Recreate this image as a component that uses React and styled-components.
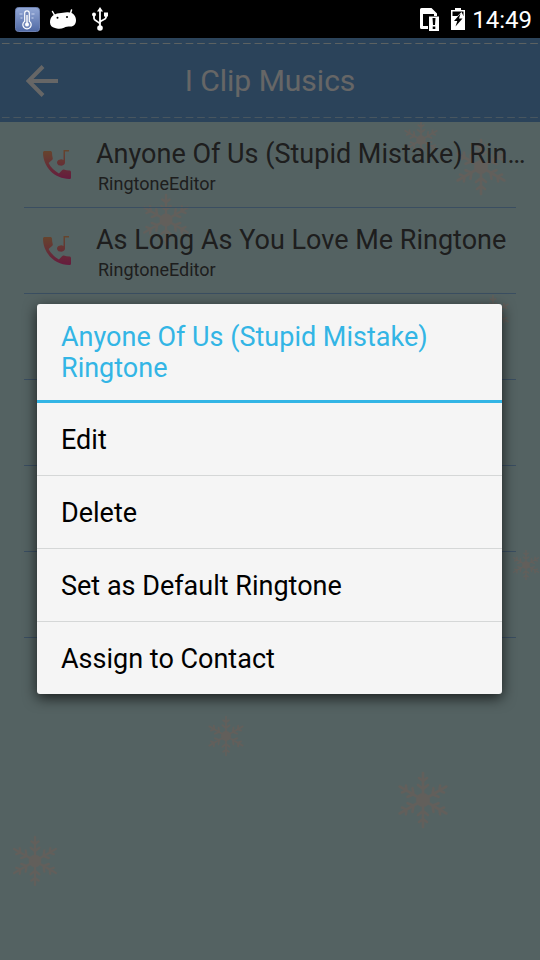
import styled, { createGlobalStyle } from 'styled-components';

const GlobalStyle = createGlobalStyle`
  * {
    box-sizing: border-box;
  }

  body {
    margin: 0;
    background-color: #d2f5f5;
    font-family: Roboto, 'Noto Sans', sans-serif;
  }
`;

const Page = styled.div`
  position: relative;
  min-height: 100vh;
  display: flex;
  flex-direction: column;
  overflow: hidden;
  background-color: #d2f5f5;
`;

const StatusBar = styled.div`
  display: flex;
  align-items: center;
  justify-content: space-between;
  height: 38px;
  padding: 0 8px 0 15px;
  background-color: #000;
  color: #fff;
`;

const StatusGroup = styled.div`
  display: flex;
  align-items: center;
  gap: ${props => props.$gap};

  svg {
    display: block;
  }
`;

const Clock = styled.time`
  padding-top: 2px;
  font-size: 24px;
  line-height: 36px;
`;

const Content = styled.div`
  position: relative;
  flex: 1;
`;

const Snow = styled.svg`
  position: absolute;
  top: 0;
  left: 0;
  width: 100%;
  color: #faece2;
`;

const Header = styled.header`
  position: relative;
  display: grid;
  grid-template-columns: 84px 1fr 84px;
  align-items: center;
  height: 84px;
  background-color: #6ba8e1;
`;

const Stitch = styled.span`
  position: absolute;
  left: 0;
  right: 0;
  ${props => (props.$bottom ? 'bottom: 4px;' : 'top: 5px;')}
  height: 1px;
  opacity: ${props => (props.$bottom ? 0.6 : 1)};
  background-image: linear-gradient(
    to right,
    transparent 16%,
    #e6f5f5 16%,
    #e6f5f5 84%,
    transparent 84%
  );
  background-size: calc(100% / 47) 100%;
`;

const BackButton = styled.button`
  display: flex;
  align-items: center;
  justify-content: center;
  height: 84px;
  padding: 2px 0 0;
  border: none;
  background: none;
  color: #fff;
  cursor: pointer;
`;

const HeaderTitle = styled.h1`
  margin: 0;
  padding-top: 2px;
  color: #fff;
  font-size: 30px;
  font-weight: 400;
  line-height: 36px;
  text-align: center;
`;

const List = styled.ul`
  position: relative;
  margin: 0;
  padding: 0;
  list-style: none;
`;

const Row = styled.li`
  height: 86px;
  padding-left: 24px;
`;

const RowBody = styled.div`
  display: flex;
  align-items: center;
  gap: 25px;
  height: 85px;
  padding-left: 19px;
  color: #4b4b4b;

  svg {
    flex: none;
  }
`;

const RowText = styled.div`
  flex: 1;
  min-width: 0;
  padding: 4px 6px 0 0;
`;

const RowTitle = styled.div`
  font-size: 27px;
  line-height: 34px;
  white-space: nowrap;
  overflow: hidden;
  text-overflow: ellipsis;
`;

const RowArtist = styled.div`
  padding-left: 2px;
  font-size: 18px;
  line-height: 26px;
`;

const Divider = styled.div`
  height: 1px;
  margin-right: 24px;
  background-color: #91c2f2;
`;

const Scrim = styled.div`
  position: absolute;
  inset: 0;
  display: flex;
  align-items: center;
  padding: 0 38px 0 37px;
  background-color: rgba(0, 0, 0, 0.6);
`;

const Dialog = styled.section`
  flex: 1;
  overflow: hidden;
  border-radius: 3px;
  background-color: #f5f5f5;
  box-shadow: 0 4px 14px rgba(0, 0, 0, 0.7);
`;

const DialogTitle = styled.h2`
  margin: 0;
  padding: 18px 24px 16px;
  border-bottom: 3px solid #33b5e5;
  color: #33b5e5;
  font-size: 27px;
  font-weight: 400;
  line-height: 31px;
`;

const Option = styled.button`
  display: block;
  width: 100%;
  height: ${props => (props.$last ? '72px' : '73px')};
  padding: 2px 24px 0;
  border: none;
  border-bottom: ${props => (props.$last ? 'none' : '1px solid #d5d7d7')};
  background: none;
  color: #000;
  font-family: inherit;
  font-size: 27px;
  line-height: 32px;
  text-align: left;
  cursor: pointer;
`;

const songs = [
  { title: 'Anyone Of Us (Stupid Mistake) Ringtone', artist: 'RingtoneEditor' },
  { title: 'As Long As You Love Me Ringtone', artist: 'RingtoneEditor' },
  null,
  null,
  null,
  null,
];

const options = ['Edit', 'Delete', 'Set as Default Ringtone', 'Assign to Contact'];

const flakes = [
  { x: 421, y: 102, r: 19 },
  { x: 481, y: 129, r: 28 },
  { x: 166, y: 182, r: 26 },
  { x: 493, y: 275, r: 18 },
  { x: 526, y: 527, r: 15 },
  { x: 226, y: 698, r: 20 },
  { x: 423, y: 762, r: 28 },
  { x: 35, y: 823, r: 25 },
];

const angles = [0, 60, 120, 180, 240, 300];

const Snowflakes = () => (
  <Snow viewBox="0 0 540 922" aria-hidden="true">
    {flakes.map(({ x, y, r }) => (
      <g
        key={`${x}-${y}`}
        transform={`translate(${x} ${y}) scale(${r / 28})`}
        fill="none"
        stroke="currentColor"
        strokeWidth="2.6"
        strokeLinecap="round"
        opacity="0.85"
      >
        <circle r="7" fill="currentColor" stroke="none" />
        {angles.map(angle => (
          <path
            key={angle}
            transform={`rotate(${angle})`}
            d="M0 -5V-27M-5 -15L0 -11L5 -15M-4 -22L0 -19L4 -22"
          />
        ))}
      </g>
    ))}
  </Snow>
);

const ThermometerIcon = () => (
  <svg width="25" height="25" viewBox="0 0 25 25">
    <defs>
      <linearGradient id="thermo" x1="0" y1="0" x2="0" y2="1">
        <stop offset="0" stopColor="#93a8d6" />
        <stop offset="1" stopColor="#5069a4" />
      </linearGradient>
    </defs>
    <rect x="0.5" y="0.5" width="24" height="24" rx="3" fill="url(#thermo)" stroke="#6d80b0" />
    <path
      d="M9.7 6.2a2.3 2.3 0 0 1 4.6 0v8a4.2 4.2 0 1 1-4.6 0z"
      fill="#7388bb"
      stroke="#fff"
      strokeWidth="1.2"
    />
    <path d="M12 8v9" stroke="#fff" strokeWidth="1.4" />
    <circle cx="12" cy="17.6" r="2" fill="#fff" />
    <path d="M4.5 7h3M5.500 11h2M16.500 7h3M16.500 11h2" stroke="#c9d4ee" />
  </svg>
);

const AndroidIcon = () => (
  <svg width="26" height="20" viewBox="0 0 26 20">
    <path d="M2.500 2.500L5 7M21.500 1L20 6" stroke="#fff" strokeWidth="1.5" strokeLinecap="round" />
    <path
      d="M0 13.500C0 8 3.500 4.800 9 4.200C12 4 14 3.600 17 3.200C22.500 2.800 26 6.500 26 11C26 15 24 17.500 20.500 17.500C17.500 17.500 16 17.500 14 18.800C11 20.200 7 19.800 5 19C2 18.500 0 16.500 0 13.500Z"
      fill="#fff"
    />
    <circle cx="7.5" cy="8.8" r="1" fill="#000" />
    <circle cx="17" cy="8" r="1" fill="#000" />
  </svg>
);

const UsbIcon = () => (
  <svg width="16" height="24" viewBox="0 0 16 24" fill="none" stroke="#fff" strokeWidth="1.8">
    <path d="M8 4V20M2 8V11.500C2 14 8 14.500 8 17.500M14 8V10.500C14 13 8 13 8 15.500" />
    <path d="M8 0L11 4.500H5Z" fill="#fff" stroke="none" />
    <circle cx="8" cy="21" r="2.8" fill="#fff" stroke="none" />
    <circle cx="2" cy="7.5" r="2" fill="#fff" stroke="none" />
    <path d="M12 5.500h4v4h-4z" fill="#fff" stroke="none" />
  </svg>
);

const SimAlertIcon = () => (
  <svg width="20" height="23" viewBox="0 0 20 23">
    <path d="M0 1.500Q0 0 1.500 0H11.500L17 5.500V8H14V6H3V18H8V21H1.500Q0 21 0 19.500Z" fill="#fff" />
    <path d="M9 8.500H19V23H9Z" fill="#fff" />
    <path d="M12.500 10H15.500L15 17H13ZM12.700 18.500H15.300V21H12.700Z" fill="#000" />
  </svg>
);

const BatteryIcon = () => (
  <svg width="14" height="22" viewBox="0 0 14 22">
    <path d="M4 0H10V2H14V22H0V2H4Z" fill="#fff" />
    <path d="M1.500 3.500H12.500V8H1.500Z" fill="#000" />
    <path d="M10.500 4L2 12.500L4 19L12.500 8Z" fill="#fff" />
    <path d="M9.500 5.500L3 13H6.300L4.500 18.500L11.500 10.500H8Z" fill="#000" />
  </svg>
);

const ArrowIcon = () => (
  <svg width="32" height="32" viewBox="0 0 32 32" fill="none" stroke="currentColor" strokeWidth="4">
    <path d="M17 1.500L2.500 16L17 30.500M3 16H32" />
  </svg>
);

const RingtoneIcon = () => (
  <svg width="28" height="29" viewBox="0 0 28 29">
    <defs>
      <linearGradient id="tone" gradientUnits="userSpaceOnUse" x1="0" y1="0" x2="0" y2="29">
        <stop offset="0" stopColor="#ffae70" />
        <stop offset="1" stopColor="#ff449a" />
      </linearGradient>
    </defs>
    <g fill="url(#tone)">
      <path d="M5.600 13.100C7.900 17.500 11.500 21.100 15.900 23.400L19.300 20C19.700 19.600 20.300 19.400 20.900 19.600C22.600 20.200 24.500 20.500 26.400 20.500C27.300 20.500 28 21.200 28 22V27.400C28 28.300 27.300 29 26.400 29C11.800 29 0 17.200 0 2.600C0 1.700 0.700 1 1.600 1H7.300C8.200 1 9 1.700 9 2.600C9 4.500 9.200 6.400 9.700 8.100C9.900 8.700 9.800 9.300 9.300 9.700Z" />
      <path d="M20.500 0H26V1.500H22V12.500A4 3.200 0 1 1 20.500 10Z" />
    </g>
  </svg>
);

const App = () => {
  return (
    <>
      <GlobalStyle />
      <Page>
        <StatusBar>
          <StatusGroup $gap="16px">
            <StatusGroup $gap="10px">
              <ThermometerIcon />
              <AndroidIcon />
            </StatusGroup>
            <UsbIcon />
          </StatusGroup>
          <StatusGroup $gap="7px">
            <StatusGroup $gap="11px">
              <SimAlertIcon />
              <BatteryIcon />
            </StatusGroup>
            <Clock>14:49</Clock>
          </StatusGroup>
        </StatusBar>

        <Content>
          <Snowflakes />
          <Header>
            <Stitch />
            <BackButton aria-label="Back">
              <ArrowIcon />
            </BackButton>
            <HeaderTitle>I Clip Musics</HeaderTitle>
            <Stitch $bottom />
          </Header>

          <List>
            {songs.map((song, i) => (
              <Row key={i}>
                <RowBody>
                  {song && (
                    <>
                      <RingtoneIcon />
                      <RowText>
                        <RowTitle>{song.title}</RowTitle>
                        <RowArtist>{song.artist}</RowArtist>
                      </RowText>
                    </>
                  )}
                </RowBody>
                <Divider />
              </Row>
            ))}
          </List>

          <Scrim>
            <Dialog role="dialog" aria-labelledby="dialog-title">
              <DialogTitle id="dialog-title">Anyone Of Us (Stupid Mistake) Ringtone</DialogTitle>
              {options.map((option, i) => (
                <Option key={option} $last={i === options.length - 1}>
                  {option}
                </Option>
              ))}
            </Dialog>
          </Scrim>
        </Content>
      </Page>
    </>
  );
};

export default App;
